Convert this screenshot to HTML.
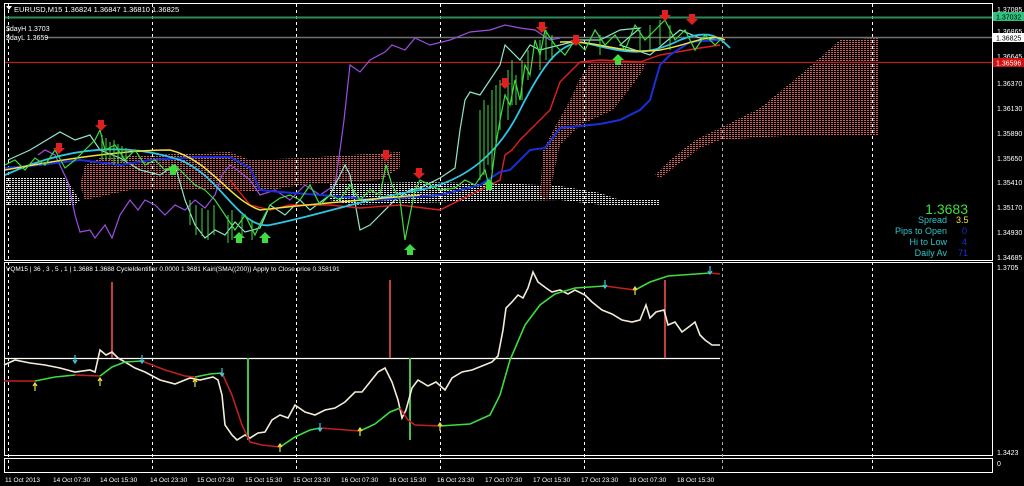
<!DOCTYPE html>
<html><head><meta charset="utf-8"><style>
body{margin:0;background:#000;width:1024px;height:486px;overflow:hidden;font-family:"Liberation Sans",sans-serif}
svg{display:block}
text{font-family:"Liberation Sans",sans-serif}
</style></head><body>
<svg width="1024" height="486" viewBox="0 0 1024 486" xmlns="http://www.w3.org/2000/svg">
<defs>
<pattern id="rd" width="3" height="2" patternUnits="userSpaceOnUse"><rect width="3" height="2" fill="#000"/><rect width="2" height="1" fill="#d0605a"/></pattern>
<pattern id="wd" width="3" height="2" patternUnits="userSpaceOnUse"><rect width="3" height="2" fill="#000"/><rect width="2" height="1" fill="#e0e0e0"/></pattern>
</defs>
<rect width="1024" height="486" fill="#000"/>
<rect x="4.5" y="3.5" width="988" height="257" fill="none" stroke="#fff"/>
<rect x="4.5" y="262.5" width="988" height="193" fill="none" stroke="#fff"/>
<rect x="4.5" y="458.5" width="988" height="14" fill="none" stroke="#fff"/>
<!-- clouds -->
<polygon fill="url(#wd)" points="5,178 65,178 70,185 80,200 75,205 5,205"/>
<polygon fill="url(#rd)" points="85,165 100,158 150,155 230,152 250,160 300,158 350,155 400,152 400,168 380,180 300,185 260,192 230,190 130,190 85,200 80,185"/>
<polygon fill="url(#wd)" points="330,184 420,182 520,184 560,186 600,193 620,200 660,200 660,206 610,206 560,200 450,202 350,205 330,200"/>
<polygon fill="url(#rd)" points="543,150 556,125 570,100 580,78 590,64 647,62 640,75 625,95 613,110 580,125 560,145 548,200 540,195"/>
<polygon fill="url(#rd)" points="655,175 670,160 695,140 720,128 760,108 800,75 840,40 878,38 878,135 800,135 720,140 700,148 660,178"/>
<!-- dashed verticals -->
<g stroke="#fff" stroke-dasharray="3,3" stroke-width="1">
<line x1="8.5" y1="4" x2="8.5" y2="472"/>
<line x1="152.5" y1="4" x2="152.5" y2="472"/>
<line x1="296.5" y1="4" x2="296.5" y2="472"/>
<line x1="440.5" y1="4" x2="440.5" y2="472"/>
<line x1="584.5" y1="4" x2="584.5" y2="472"/>
<line x1="872.5" y1="4" x2="872.5" y2="472"/>
</g>
<line x1="722.5" y1="4" x2="722.5" y2="472" stroke="#aaa" stroke-dasharray="3,3"/>
<line x1="5" y1="17.5" x2="992" y2="17.5" stroke="#2e8b57" stroke-width="2"/>
<line x1="45" y1="37.5" x2="992" y2="37.5" stroke="#707070" stroke-width="1.5"/>
<line x1="5" y1="62.5" x2="992" y2="62.5" stroke="#b22222" stroke-width="1.2"/>
<!-- purple line -->
<polyline fill="none" stroke="#9b4fe0" stroke-width="1.2" points="38,155 45,150 55,155 68,182 75,215 80,232 90,230 95,238 105,225 112,238 120,215 130,200 138,210 145,200 155,205 165,215 175,205 185,210 195,200 205,208 215,195 222,175 230,165 240,172 250,180 260,195 275,190 290,200 305,185 320,195 335,185 340,150 344,120 350,65 360,72 370,60 385,52 392,45 405,50 415,38 430,45 450,40 470,32 490,30 505,25 520,28 535,30 550,40 560,38"/>
<!-- aquamarine -->
<polyline fill="none" stroke="#8ee6c8" stroke-width="1.2" points="8,160 30,150 60,132 75,140 90,135 100,150 120,158 140,170 160,175 175,165 185,200 195,225 205,238 215,230 225,235 235,222 245,232 260,228 270,205 285,215 300,200 310,210 330,195 345,165 350,175 360,230 370,225 380,215 395,200 410,190 420,188 440,178 455,168 460,130 465,100 470,92 480,95 490,80 500,65 505,45 520,60 530,45 540,50 560,45 580,40 600,40 620,30 640,28 620,45 650,55 680,30 700,38 720,40"/>
<polyline fill="none" stroke="#e02020" stroke-width="1.4" points="230,180 250,205 270,210 290,205 330,205 360,208 400,205 440,210 480,190 500,180 505,155 512,150 520,140 530,130 540,120 550,110 560,82 580,62 600,60 640,62 660,55 700,48 720,45"/>
<polyline fill="none" stroke="#1a2fd8" stroke-width="2" points="5,168 40,165 80,160 120,165 150,160 200,157 230,157 250,168 260,190 280,192 320,195 380,200 400,198 440,195 480,185 500,172 510,170 530,150 545,148 560,128 580,126 600,124 620,120 640,110 650,100 660,65 670,55 690,42 720,40"/>
<path fill="none" stroke="#2ec5e8" stroke-width="1.8" d="M5,175 C60,150 120,140 180,160 C220,175 240,230 270,225 C320,215 360,200 420,190 C470,180 500,150 520,110 C545,60 560,45 580,42 C620,50 640,60 680,40 C710,28 720,38 730,48"/>
<path fill="none" stroke="#f0e040" stroke-width="1.5" d="M5,170 C60,160 120,150 170,150 C210,160 230,200 260,210 C300,205 360,200 420,195 M560,42 C600,40 620,55 660,50 C690,45 710,32 725,40"/>
<!-- green price with bars -->
<polyline fill="none" stroke="#3fdc3f" stroke-width="1.2" points="5,165 15,160 25,170 35,158 45,165 55,150 65,168 75,160 85,150 95,140 100,130 105,150 115,145 125,160 135,150 145,165 155,160 165,170 175,165 185,175 195,185 205,190 215,200 225,215 235,230 245,215 255,235 262,220 270,205 280,198 290,195 300,200 310,185 320,205 330,195 340,200 350,185 360,200 370,190 380,195 386,165 392,185 400,200 405,240 410,215 415,190 420,180 430,185 440,190 455,188 465,180 475,185 485,170 490,190 495,150 500,120 505,95 510,105 515,80 520,100 525,65 530,75 535,40 540,55 545,30 555,45 565,55 575,40 585,50 595,30 605,45 615,35 625,50 635,25 645,40 655,30 665,20 675,40 685,30 695,50 705,35 715,45 720,40"/>
<g stroke="#3fdc3f" stroke-width="1">
<path d="M102,135v25M106,138v22M110,142v18M114,140v25M118,144v20M122,146v16M126,148v14M190,200v25M196,205v30M202,208v28M208,210v30M214,205v30M228,215v28M232,210v30M242,215v20M252,220v20M480,110v70M484,100v75M488,105v60M492,90v80M496,85v60M500,80v50M508,70v50M512,60v45M516,75v30M522,60v40M528,50v30M540,40v30M546,30v30M552,35v25M600,35v20M640,30v20M650,25v25M660,20v25M670,25v25"/>
</g>
<g fill="#e02020">
<path d="M98,120h6v5h3l-6,6l-6,-6h3z"/><path d="M56,143h6v5h3l-6,6l-6,-6h3z"/><path d="M383,150h6v5h3l-6,6l-6,-6h3z"/><path d="M416,168h6v5h3l-6,6l-6,-6h3z"/><path d="M502,78h6v5h3l-6,6l-6,-6h3z"/><path d="M539,22h6v5h3l-6,6l-6,-6h3z"/><path d="M662,10h6v5h3l-6,6l-6,-6h3z"/><path d="M689,14h6v5h3l-6,6l-6,-6h3z"/><path d="M573,35h6v5h3l-6,6l-6,-6h3z"/>
</g>
<g fill="#3fdc3f">
<path d="M233,238l6,-6l6,6h-3v5h-6v-5z"/><path d="M259,238l6,-6l6,6h-3v5h-6v-5z"/><path d="M404,250l6,-6l6,6h-3v5h-6v-5z"/><path d="M167,170l6,-6l6,6h-3v5h-6v-5z"/><path d="M483,185l6,-6l6,6h-3v5h-6v-5z"/><path d="M612,60l6,-6l6,6h-3v5h-6v-5z"/>
</g>
<path d="M6,6h6l-3,4z" fill="#fff"/>
<text x="14" y="12" fill="#fff" font-size="7.5">EURUSD,M15  1.36824 1.36847 1.36810 1.36825</text>
<text x="6" y="31" fill="#fff" font-size="7">$dayH 1.3703</text>
<text x="6" y="40" fill="#fff" font-size="7">$dayL 1.3659</text>
<g fill="#fff" font-size="7">
<text x="997" y="12">1.37085</text>
<text x="997" y="34">1.36865</text>
<text x="997" y="59">1.36645</text>
<text x="997" y="86">1.36370</text>
<text x="997" y="111">1.36130</text>
<text x="997" y="136">1.35890</text>
<text x="997" y="161">1.35650</text>
<text x="997" y="185">1.35410</text>
<text x="997" y="210">1.35170</text>
<text x="997" y="235">1.34930</text>
<text x="997" y="260">1.34685</text>
<text x="997" y="270">1.3705</text>
<text x="997" y="455">1.3423</text>
<text x="997" y="466">0</text>
</g>
<rect x="993" y="12" width="31" height="9" fill="#2ec27e"/><text x="996" y="19.5" font-size="7" fill="#000">1.37032</text>
<rect x="993" y="33" width="31" height="9" fill="#fff"/><text x="996" y="40.5" font-size="7" fill="#000">1.36825</text>
<rect x="993" y="58" width="31" height="9" fill="#d01010"/><text x="996" y="65.5" font-size="7" fill="#fff">1.36596</text>
<text x="968" y="214" fill="#3fdc3f" font-size="14" text-anchor="end">1.3683</text>
<text x="947" y="223" fill="#2ec5c8" font-size="9" text-anchor="end">Spread</text>
<text x="956" y="223" fill="#f0e040" font-size="9">3.5</text>
<text x="947" y="234" fill="#2ec5c8" font-size="9" text-anchor="end">Pips to Open</text>
<text x="962" y="234" fill="#1a2fd8" font-size="9">0</text>
<text x="947" y="245" fill="#2ec5c8" font-size="9" text-anchor="end">Hi to Low</text>
<text x="962" y="245" fill="#1a2fd8" font-size="9">4</text>
<text x="947" y="256" fill="#2ec5c8" font-size="9" text-anchor="end">Daily Av</text>
<text x="958" y="256" fill="#1a2fd8" font-size="9">71</text>
<text x="6" y="271" fill="#fff" font-size="6.5">VQM15 | 36 , 3 , 5 , 1 |  1.3688 1.3688  CycleIdentifier 0.0000 1.3681  Kairi(SMA((200)) Apply to Close price 0.358191</text>
<line x1="5" y1="358.5" x2="720" y2="358.5" stroke="#fff" stroke-width="1.2"/>
<g stroke="#c04040" stroke-width="2"><line x1="112" y1="282" x2="112" y2="358"/><line x1="390" y1="280" x2="390" y2="358"/><line x1="665" y1="280" x2="665" y2="358"/></g>
<g stroke="#4ac24a" stroke-width="2"><line x1="248" y1="358" x2="248" y2="440"/><line x1="410" y1="358" x2="410" y2="440"/></g>
<polyline fill="none" stroke="#f4ecd8" stroke-width="1.6" points="4,365 15,360 30,363 45,365 60,368 75,372 90,370 95,372 100,350 106,355 112,352 118,358 125,362 135,368 145,372 160,380 175,384 190,378 200,380 213,377 218,380 222,395 225,425 232,435 237,440 245,435 250,438 258,433 265,432 272,420 280,415 288,418 295,405 305,412 315,415 325,410 335,408 345,402 355,392 362,392 370,382 378,372 385,368 392,382 398,400 402,418 406,410 412,388 418,380 428,386 436,382 445,390 452,378 462,372 472,370 482,366 492,362 498,356 503,330 506,308 512,302 518,295 523,298 528,288 533,272 538,282 546,288 552,292 560,290 568,294 575,290 585,295 592,302 602,310 612,314 622,320 632,322 640,320 646,305 650,318 656,312 664,310 668,325 675,322 682,332 690,326 695,322 700,335 705,340 712,345 720,345"/>
<g fill="none" stroke-width="1.6">
<polyline stroke="#c02020" points="4,381 35,381"/>
<polyline stroke="#3fdc3f" points="35,381 55,377 75,375"/>
<polyline stroke="#c02020" points="75,375 100,376"/>
<polyline stroke="#3fdc3f" points="100,376 112,367 125,362 142,361"/>
<polyline stroke="#c02020" points="142,361 165,370 185,376 195,377"/>
<polyline stroke="#3fdc3f" points="195,377 210,374 222,373"/>
<polyline stroke="#c02020" points="222,373 232,395 242,425 250,442 262,445 280,447"/>
<polyline stroke="#3fdc3f" points="280,447 295,437 310,430 320,428"/>
<polyline stroke="#c02020" points="320,428 360,431"/>
<polyline stroke="#3fdc3f" points="360,431 375,424 390,412 400,408"/>
<polyline stroke="#c02020" points="400,408 408,420 415,425 440,426"/>
<polyline stroke="#3fdc3f" points="440,426 470,424 490,415 500,395 510,360 525,325 540,305 555,294 575,288 605,286"/>
<polyline stroke="#c02020" points="605,286 635,290"/>
<polyline stroke="#3fdc3f" points="635,290 650,282 668,276 710,273"/>
<polyline stroke="#c02020" points="710,273 720,274"/>
</g>
<g stroke-width="1.2" fill="none">
<g stroke="#40c8e0"><path d="M75,355v8m-2,-3l2,3l2,-3"/><path d="M142,355v8m-2,-3l2,3l2,-3"/><path d="M222,368v8m-2,-3l2,3l2,-3"/><path d="M320,423v8m-2,-3l2,3l2,-3"/><path d="M605,280v8m-2,-3l2,3l2,-3"/><path d="M710,266v8m-2,-3l2,3l2,-3"/></g>
<g stroke="#f0e040"><path d="M35,383v8m-2,-5l2,-3l2,3"/><path d="M100,378v8m-2,-5l2,-3l2,3"/><path d="M195,379v8m-2,-5l2,-3l2,3"/><path d="M280,444v8m-2,-5l2,-3l2,3"/><path d="M360,428v8m-2,-5l2,-3l2,3"/><path d="M440,423v8m-2,-5l2,-3l2,3"/><path d="M635,287v8m-2,-5l2,-3l2,3"/></g>
</g>
<g fill="#fff" font-size="6.5">
<text x="5" y="482">11 Oct 2013</text><text x="53" y="482">14 Oct 07:30</text><text x="100" y="482">14 Oct 15:30</text><text x="150" y="482">14 Oct 23:30</text><text x="197" y="482">15 Oct 07:30</text><text x="245" y="482">15 Oct 15:30</text><text x="293" y="482">15 Oct 23:30</text><text x="341" y="482">16 Oct 07:30</text><text x="389" y="482">16 Oct 15:30</text><text x="437" y="482">16 Oct 23:30</text><text x="485" y="482">17 Oct 07:30</text><text x="533" y="482">17 Oct 15:30</text><text x="581" y="482">17 Oct 23:30</text><text x="629" y="482">18 Oct 07:30</text><text x="677" y="482">18 Oct 15:30</text>
</g>
</svg>
</body></html>
